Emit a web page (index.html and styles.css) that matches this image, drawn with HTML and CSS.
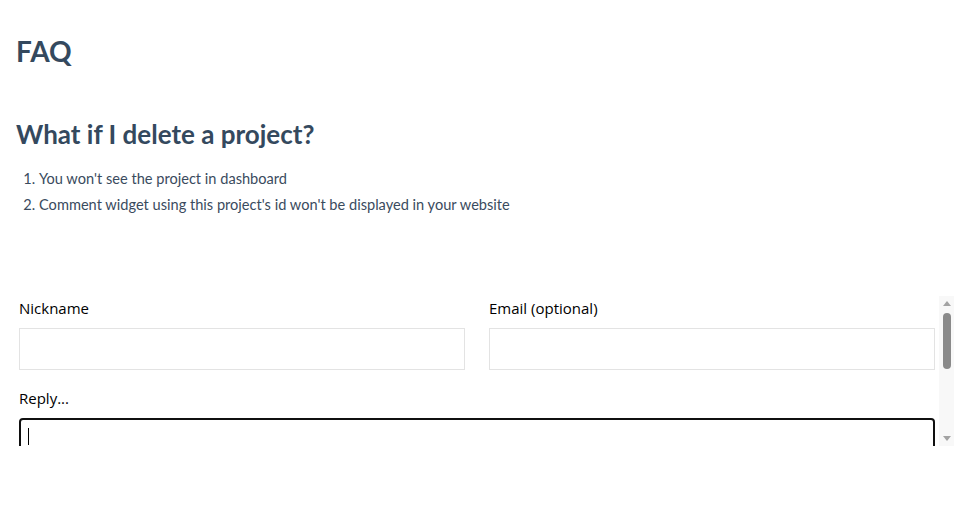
FILE: index.html
```html
<!DOCTYPE html>
<html lang="en">
<head>
<meta charset="utf-8">
<title>FAQ</title>
<link rel="stylesheet" href="styles.css">
</head>
<body>
<main class="page">
  <h1 class="title">FAQ</h1>
  <h2 class="question">What if I delete a project?</h2>
  <ol class="answers">
    <li>You won't see the project in dashboard</li>
    <li>Comment widget using this project's id won't be displayed in your website</li>
  </ol>
  <section class="widget">
    <div class="widget-body">
      <form class="form">
        <div class="row">
          <label class="field">
            <span class="label">Nickname</span>
            <input class="input" type="text">
          </label>
          <label class="field">
            <span class="label">Email (optional)</span>
            <input class="input" type="email">
          </label>
        </div>
        <label class="field">
          <span class="label">Reply...</span>
          <span class="textarea"><span class="caret"></span></span>
        </label>
      </form>
    </div>
    <div class="scrollbar">
      <span class="arrow up"></span>
      <span class="thumb"></span>
      <span class="spacer"></span>
      <span class="arrow down"></span>
    </div>
  </section>
</main>
</body>
</html>
```
FILE: styles.css
```css
* { box-sizing: border-box; }
html, body { margin: 0; padding: 0; background: #fff; }
body { font-family: Lato, "Open Sans", sans-serif; color: #34495e; }
.page { padding: 0 15px 0 16px; }
.title {
  margin: 0;
  padding-top: 31px;
  font-size: 28px;
  line-height: 40px;
  font-weight: 700;
  color: #34495e;
}
.question {
  margin: 46px 0 0;
  font-size: 26px;
  line-height: 34px;
  font-weight: 700;
  color: #34495e;
}
.answers {
  margin: 15px 0 0;
  padding-left: 23px;
  font-size: 14.6px;
  line-height: 26px;
  color: #3a4b5e;
}
.widget {
  margin-top: 78px;
  height: 150px;
  display: flex;
}
.widget-body {
  flex: 1;
  overflow: hidden;
  padding: 0 4px 0 3px;
  font-family: "Open Sans", "Noto Sans", sans-serif;
  color: #000;
}
.form { display: flex; flex-direction: column; gap: 16px; }
.row { display: grid; grid-template-columns: 1fr 1fr; column-gap: 24px; }
.field { display: flex; flex-direction: column; }
.label {
  font-size: 15px;
  line-height: 24px;
  padding: 0 0 8px;
}
.input {
  height: 42px;
  border: 1px solid #e3e3e3;
  background: #fff;
  margin: 0;
  outline: none;
}
.textarea {
  display: block;
  height: 80px;
  border: 2px solid #101010;
  border-radius: 4px;
  padding: 8px 7px;
}
.caret {
  display: block;
  width: 1px;
  height: 17px;
  background: #000;
}
.scrollbar {
  width: 15px;
  background: #f8f8f8;
  display: flex;
  flex-direction: column;
  align-items: center;
}
.arrow {
  width: 0;
  height: 0;
  border-left: 4px solid transparent;
  border-right: 4px solid transparent;
}
.arrow.up { border-bottom: 5px solid #a3a3a3; margin-top: 5px; }
.arrow.down { border-top: 5px solid #a3a3a3; margin-bottom: 5px; }
.thumb {
  margin-top: 7px;
  width: 8px;
  height: 56px;
  border-radius: 4px;
  background: #8a8a8a;
}
.spacer { flex: 1; }
```
